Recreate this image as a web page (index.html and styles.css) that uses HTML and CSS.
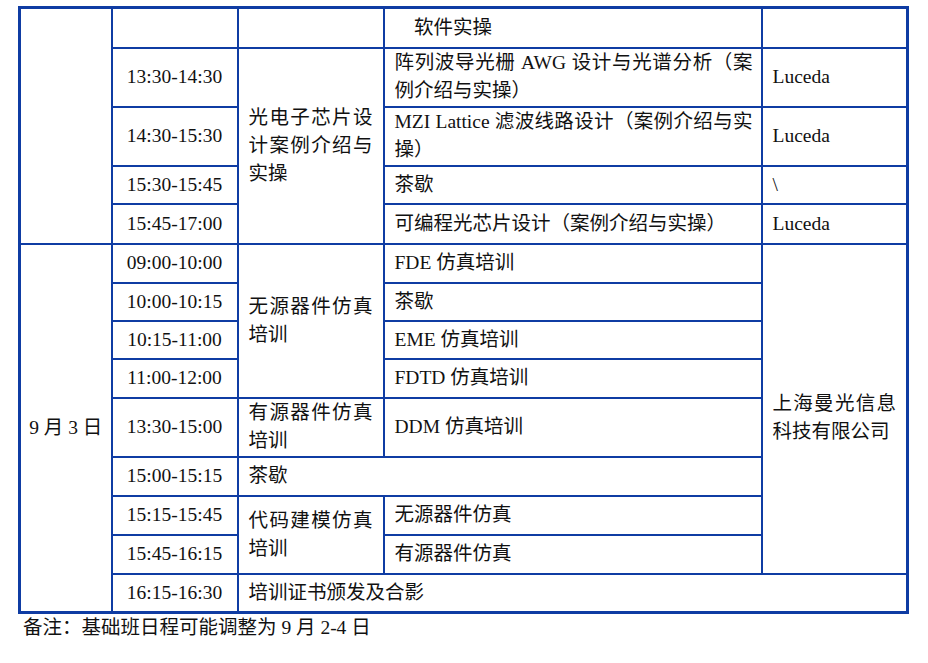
FILE: index.html
```html
<!DOCTYPE html>
<html lang="zh-CN">
<head>
<meta charset="utf-8">
<title>培训日程</title>
<link rel="stylesheet" href="styles.css">
</head>
<body>
<div class="page">
<table class="schedule">
  <colgroup>
    <col class="c-day">
    <col class="c-time">
    <col class="c-topic">
    <col class="c-content">
    <col class="c-vendor">
  </colgroup>
  <tbody>
    <tr class="h40">
      <td class="day" rowspan="5"></td>
      <td class="time"></td>
      <td class="topic"></td>
      <td class="content indent">软件实操</td>
      <td class="vendor"></td>
    </tr>
    <tr class="h59">
      <td class="time">13:30-14:30</td>
      <td class="topic" rowspan="4">光电子芯片设计案例介绍与实操</td>
      <td class="content">阵列波导光栅 AWG 设计与光谱分析（案例介绍与实操）</td>
      <td class="vendor">Luceda</td>
    </tr>
    <tr class="h59">
      <td class="time">14:30-15:30</td>
      <td class="content">MZI Lattice 滤波线路设计（案例介绍与实操）</td>
      <td class="vendor">Luceda</td>
    </tr>
    <tr class="h38">
      <td class="time">15:30-15:45</td>
      <td class="content">茶歇</td>
      <td class="vendor">\</td>
    </tr>
    <tr class="h40">
      <td class="time">15:45-17:00</td>
      <td class="content">可编程光芯片设计（案例介绍与实操）</td>
      <td class="vendor">Luceda</td>
    </tr>
    <tr class="h39">
      <td class="day" rowspan="9">9 月 3 日</td>
      <td class="time">09:00-10:00</td>
      <td class="topic" rowspan="4">无源器件仿真培训</td>
      <td class="content">FDE 仿真培训</td>
      <td class="vendor company" rowspan="8">上海曼光信息科技有限公司</td>
    </tr>
    <tr class="h38">
      <td class="time">10:00-10:15</td>
      <td class="content">茶歇</td>
    </tr>
    <tr class="h38">
      <td class="time">10:15-11:00</td>
      <td class="content">EME 仿真培训</td>
    </tr>
    <tr class="h39">
      <td class="time">11:00-12:00</td>
      <td class="content">FDTD 仿真培训</td>
    </tr>
    <tr class="h59">
      <td class="time">13:30-15:00</td>
      <td class="topic">有源器件仿真培训</td>
      <td class="content">DDM 仿真培训</td>
    </tr>
    <tr class="h39">
      <td class="time">15:00-15:15</td>
      <td class="topic" colspan="2">茶歇</td>
    </tr>
    <tr class="h39">
      <td class="time">15:15-15:45</td>
      <td class="topic" rowspan="2">代码建模仿真培训</td>
      <td class="content">无源器件仿真</td>
    </tr>
    <tr class="h39">
      <td class="time">15:45-16:15</td>
      <td class="content">有源器件仿真</td>
    </tr>
    <tr class="h39">
      <td class="time">16:15-16:30</td>
      <td class="topic" colspan="3">培训证书颁发及合影</td>
    </tr>
  </tbody>
</table>
<p class="note">备注：基础班日程可能调整为 9 月 2-4 日</p>
</div>
</body>
</html>
```

FILE: styles.css
```css
html, body {
  margin: 0;
  padding: 0;
  background: #ffffff;
}

body {
  font-family: "Liberation Serif", "Noto Sans CJK SC", serif;
  font-size: 19.5px;
  color: #111111;
}

.page {
  padding: 6px 0 0 18px;
}

.schedule {
  border-collapse: collapse;
  table-layout: fixed;
  width: 891px;
  border: 3px solid #0f3ca3;
}

.c-day { width: 92px; }
.c-time { width: 126px; }
.c-topic { width: 146px; }
.c-content { width: 378px; }
.c-vendor { width: 146px; }

.schedule td {
  border: 2px solid #0f3ca3;
  padding: 0 10px;
  line-height: 28px;
  vertical-align: middle;
  text-align: justify;
}

.h38 { height: 38px; }
.h39 { height: 39px; }
.h40 { height: 40px; }
.h59 { height: 59px; }

.schedule td.day,
.schedule td.time {
  text-align: center;
  padding: 0 4px;
}

.schedule td.content {
  padding: 0 8px 0 10px;
}

.schedule td.indent {
  text-indent: 1em;
}

.schedule td.company {
  padding-top: 18px;
}

.note {
  margin: 0;
  padding-left: 5px;
  line-height: 28px;
}
```
